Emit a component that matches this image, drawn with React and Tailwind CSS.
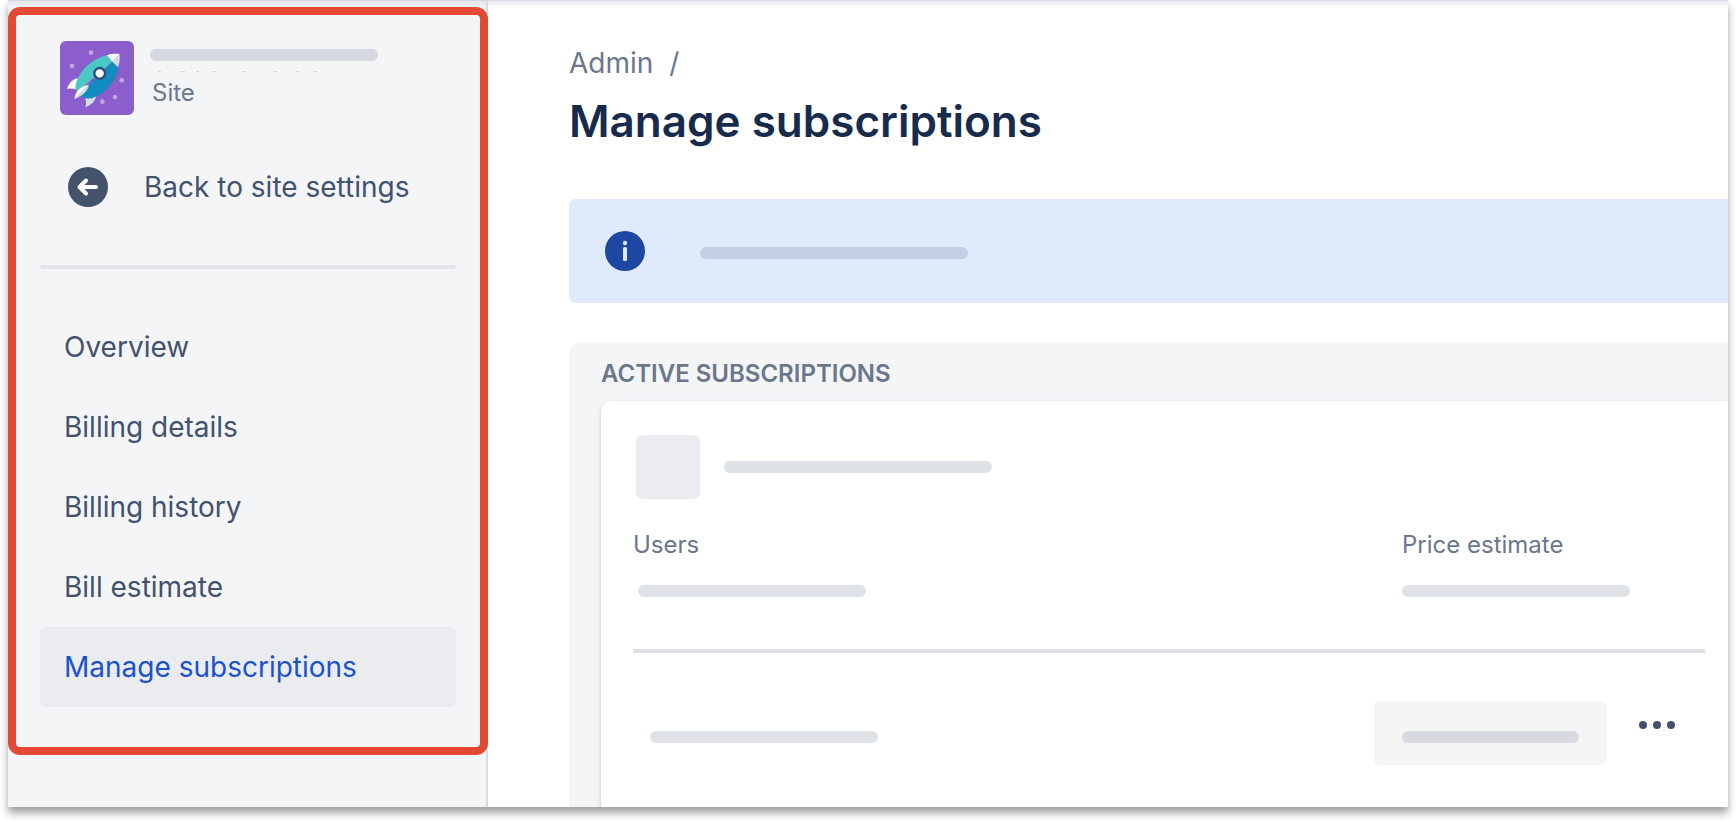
const navItems = [
  { label: 'Overview' },
  { label: 'Billing details' },
  { label: 'Billing history' },
  { label: 'Bill estimate' },
  { label: 'Manage subscriptions', active: true },
];

function RocketAvatar() {
  return (
    <svg viewBox="0 0 222 222" className="w-[74px] h-[74px] rounded-md shrink-0" aria-hidden="true">
      <rect width="222" height="222" fill="#8b5ecb" />
      <g fill="#c3a5e6">
        <circle cx="93" cy="35" r="7" />
        <circle cx="36" cy="75" r="7" />
        <circle cx="185" cy="118" r="7" />
        <circle cx="165" cy="168" r="7" />
        <circle cx="127" cy="182" r="7" />
      </g>
      <path d="M57 112C40 113 28 124 21 144C30 142 39 142 48 145Z" fill="#fff" />
      <path d="M109 161C107 178 97 191 76 199C79 190 79 182 75 171Z" fill="#d3dfe8" />
      <path d="M141 43C95 53 57 90 47 132C45 142 47 149 52 152L157 62Z" fill="#4bc7c6" />
      <path d="M157 62L175 79C168 122 139 156 98 171C84 174 72 173 67 169L60 160Z" fill="#118bc0" />
      <path d="M141 43C153 38 166 38 179 39L157 62Z" fill="#fff" />
      <path d="M179 39C180 53 179 66 174 79L157 62Z" fill="#d3dfe8" />
      <path d="M86 132C60 134 46 154 43 174Z" fill="#fff" />
      <path d="M86 132C88 146 64 168 43 174Z" fill="#d3dfe8" />
      <circle cx="119" cy="97" r="16" fill="#fff" stroke="#2b4d7e" strokeWidth="7" />
    </svg>
  );
}

function BackIcon() {
  return (
    <svg viewBox="0 0 40 40" className="w-10 h-10 shrink-0" aria-hidden="true">
      <circle cx="20" cy="20" r="20" fill="#44526c" />
      <path d="M28 20H12M18 13.500L11.500 20L18 26.500" fill="none" stroke="#fff" strokeWidth="4" strokeLinecap="round" strokeLinejoin="round" />
    </svg>
  );
}

function InfoIcon() {
  return (
    <svg viewBox="0 0 40 40" className="w-10 h-10 shrink-0" aria-hidden="true">
      <circle cx="20" cy="20" r="20" fill="#1c48a2" />
      <circle cx="20" cy="12" r="2.200" fill="#dfeafd" />
      <rect x="18" y="16" width="4" height="14" rx="1.500" fill="#dfeafd" />
    </svg>
  );
}

function Sidebar() {
  return (
    <aside className="w-[480px] shrink-0 pt-[7px] bg-[#f4f5f7] shadow-[inset_-2px_0_0_#dadbdd,inset_0_1px_0_#d5d7e0,inset_0_8px_6px_-4px_#e2e3ea]">
      <div className="border-8 border-[#e34935] rounded-xl bg-[#f4f5f7] px-6 pt-[26px] pb-10">
        <div className="flex items-start gap-4 pl-5">
          <RocketAvatar />
          <div className="pt-2">
            <div className="w-[228px] h-3 rounded-full bg-[#d5d8e0]" />
            <svg viewBox="0 0 228 12" className="w-[228px] h-3" aria-hidden="true">
              <path d="M8 10.500h3M30 10.500h5M46 10.500h3M62 10.500h4M92 10.500h4M123 10.500h4M146 10.500h3M163 10.500h4" stroke="#d3d6dc" />
            </svg>
            <p className="pl-0.5 pt-1 text-2xl leading-8 text-[#6b778c]">Site</p>
          </div>
        </div>

        <a href="#settings" className="flex items-center gap-9 mt-[52px] pl-7 h-10 text-[28px] text-[#42526e]">
          <BackIcon />
          Back to site settings
        </a>

        <hr className="mt-[58px] border-0 h-1 rounded-full bg-[#e2e4e9]" />

        <nav className="mt-[38px]">
          {navItems.map(item => (
            <a
              key={item.label}
              href="#"
              className={`flex items-center h-20 px-6 rounded-md text-[28px] ${item.active ? 'bg-[#ebecf0] text-[#1a53cc]' : 'text-[#42526e]'}`}
            >
              {item.label}
            </a>
          ))}
        </nav>
      </div>
    </aside>
  );
}

function SubscriptionCard() {
  return (
    <div className="bg-white rounded-tl-[10px] pt-[34px] pl-8 pr-[23px] pb-[42px] shadow-[0_2px_4px_#c3c8d2]">
      <div className="flex items-center gap-6 pl-[3px]">
        <div className="w-16 h-16 rounded-md bg-[#ebecf0]" />
        <div className="w-[268px] h-3 rounded-full bg-[#dfe2e7]" />
      </div>

      <div className="flex justify-between mt-[30px] pb-[52px] border-b-4 border-[#dfe1e6]">
        <div>
          <p className="text-2xl text-[#6b778c]">Users</p>
          <div className="w-[228px] h-3 ml-[5px] mt-6 rounded-full bg-[#dfe2e7]" />
        </div>
        <div className="w-[303px]">
          <p className="text-2xl text-[#6b778c]">Price estimate</p>
          <div className="w-[228px] h-3 mt-6 rounded-full bg-[#dfe2e7]" />
        </div>
      </div>

      <div className="flex items-center mt-12 pl-[17px] pr-6">
        <div className="w-[228px] h-3 mt-2 rounded-full bg-[#dfe2e7]" />
        <button type="button" aria-label="Manage" className="flex items-center w-[233px] h-16 ml-auto px-7 rounded-md bg-[#f5f5f5]">
          <span className="w-[178px] h-3 mt-2 rounded-full bg-[#d7dae0]" />
        </button>
        <button type="button" aria-label="More actions" className="self-start flex items-center justify-center gap-1.5 w-12 h-12 ml-[26px]">
          <span className="w-2 h-2 rounded-full bg-[#42526e]" />
          <span className="w-2 h-2 rounded-full bg-[#42526e]" />
          <span className="w-2 h-2 rounded-full bg-[#42526e]" />
        </button>
      </div>
    </div>
  );
}

export default function App() {
  return (
    <div className="pb-[15px] px-2 bg-white overflow-hidden font-['Inter',sans-serif]">
      <div className="flex bg-white overflow-hidden shadow-[0_6px_8px_#a0a0a0]">
        <Sidebar />

        <main className="flex-1 min-w-0 pl-[81px] pt-[43px] shadow-[inset_0_1px_0_#d9dbe4,inset_0_8px_6px_-5px_#dfe0e6]">
          <div className="flex gap-4 h-10 items-center text-[28px] text-[#6b778c]">
            <a href="#admin">Admin</a>
            <span>/</span>
          </div>
          <h1 className="mt-2 text-[44px] leading-[60px] font-semibold text-[#172b4d]">Manage subscriptions</h1>

          <div className="flex items-center h-[104px] mt-12 pl-9 rounded-l-md bg-[#dfeafd]">
            <InfoIcon />
            <div className="w-[268px] h-3 ml-[55px] mt-1 rounded-full bg-[#c4cfe6]" />
          </div>

          <section className="mt-10 pl-8 rounded-tl-[10px] bg-[#f4f5f7]">
            <h2 className="flex items-center h-[58px] pt-1 text-2xl font-semibold text-[#6b778c]">ACTIVE SUBSCRIPTIONS</h2>
            <SubscriptionCard />
          </section>
        </main>
      </div>
    </div>
  );
}
